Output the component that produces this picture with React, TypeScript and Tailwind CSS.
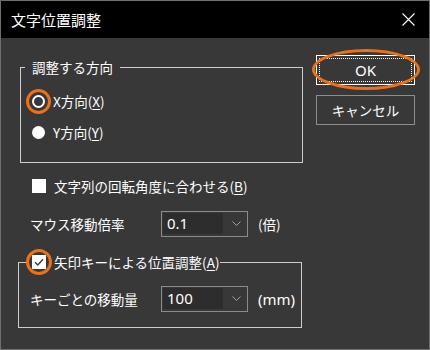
import type { ReactNode } from 'react'

const ORANGE = 'border-[#f07016]'

function Chevron() {
  return (
    <svg width="9" height="5" viewBox="0 0 9 5">
      <path d="M0.5 0.5 L4.5 4.5 L8.5 0.5" fill="none" stroke="#a0a0a0" strokeWidth="1" />
    </svg>
  )
}

function Combo({ value }: { value: string }) {
  return (
    <div className="flex h-[26px] w-[87px] border border-[#8b8b8b] p-[1px]">
      <div className="h-[21px] w-[60px] bg-[#2d2d2d] pl-[4px] font-['Noto_Sans',sans-serif] text-[15px] leading-[21px] text-white">
        {value}
      </div>
      <div className="flex flex-1 justify-center pl-[4px] pt-[8px]">
        <Chevron />
      </div>
    </div>
  )
}

function Ring({ size, offset }: { size: string; offset: string }) {
  return <span className={`pointer-events-none absolute rounded-full border-[3px] ${ORANGE} ${size} ${offset}`} />
}

function Mnemonic({ before, k, after }: { before: string; k: string; after?: ReactNode }) {
  return (
    <span>
      {before}(<span className="underline underline-offset-2">{k}</span>){after}
    </span>
  )
}

export default function App() {
  return (
    <div className="flex h-[350px] w-[430px] flex-col border border-[#6f6f6f] bg-[#383838] font-['Noto_Sans_CJK_JP',sans-serif] text-[13.5px] text-white">
      {/* Title bar */}
      <div className="flex h-[37px] shrink-0 items-center justify-between bg-black pl-[10px] pr-[14px]">
        <span className="text-[15px] leading-[20px]">文字位置調整</span>
        <svg width="13" height="13" viewBox="0 0 13 13">
          <path d="M0.5 0.5 L12.5 12.5 M12.5 0.5 L0.5 12.5" stroke="#fff" strokeWidth="1.1" />
        </svg>
      </div>

      {/* Direction group + buttons */}
      <div className="mt-[17px] flex">
        <div className="ml-[19px] w-[283px] pt-[2px]">
          <fieldset className="border border-[#cdcdcd]">
            <legend className="ml-[4px] px-[7px] leading-[20px]">調整する方向</legend>
            <div className="flex flex-col gap-[11px] pb-[20px] pl-[11px] pt-[14px]">
              <div className="flex h-[20px] items-center leading-[20px]">
                <span className="relative h-[13px] w-[13px] rounded-full border-2 border-white">
                  <Ring size="h-[25px] w-[25px]" offset="-left-[8px] -top-[8px]" />
                </span>
                <span className="ml-[8px]">
                  <Mnemonic before="X方向" k="X" />
                </span>
              </div>
              <div className="flex h-[20px] items-center leading-[20px]">
                <span className="h-[13px] w-[13px] rounded-full bg-white" />
                <span className="ml-[8px]">
                  <Mnemonic before="Y方向" k="Y" />
                </span>
              </div>
            </div>
          </fieldset>
        </div>

        <div className="ml-[13px] flex w-[99px] flex-col">
          <div className="relative h-[30px] border border-white p-[2px]">
            <div className="flex h-full items-center justify-center border border-dotted border-white font-['Noto_Sans',sans-serif] text-[15px]">
              OK
            </div>
            <span className={`pointer-events-none absolute -bottom-[6px] -left-[5px] -right-[6px] -top-[7px] rounded-[50%] border-[3px] ${ORANGE}`} />
          </div>
          <div className="mt-[10px] flex h-[30px] items-center justify-center border border-[#8e8e8e]">キャンセル</div>
        </div>
      </div>

      {/* Rotation checkbox */}
      <div className="ml-[31px] mt-[13px] flex h-[20px] items-center leading-[20px]">
        <span className="h-[14px] w-[14px] bg-white" />
        <span className="ml-[8px]">
          <Mnemonic before="文字列の回転角度に合わせる" k="B" />
        </span>
      </div>

      {/* Mouse rate */}
      <div className="mt-[15px] flex h-[26px] items-center">
        <span className="ml-[29px] w-[131px]">マウス移動倍率</span>
        <Combo value="0.1" />
        <span className="ml-[10px]">(倍)</span>
      </div>

      {/* Arrow key group */}
      <fieldset className="ml-[17px] mt-[12px] w-[284px] border border-[#cdcdcd]">
        <legend className="ml-[10px] h-[26px] pl-[3px] pr-[1px]">
          <div className="flex h-[26px] items-center leading-[20px]">
            <span className="relative flex h-[14px] w-[14px] items-center justify-center bg-white">
              <svg width="14" height="14" viewBox="0 0 14 14">
                <path d="M3 7.2 L5.8 10 L11 4.2" fill="none" stroke="#3a3a3a" strokeWidth="1.4" />
              </svg>
              <Ring size="h-[26px] w-[26px]" offset="-left-[6px] -top-[6px]" />
            </span>
            <span className="ml-[8px]">
              <Mnemonic before="矢印キーによる位置調整" k="A" />
            </span>
          </div>
        </legend>
        <div className="mb-[15px] mt-[11px] flex h-[26px] items-center pl-[11px]">
          <span className="w-[131px]">キーごとの移動量</span>
          <Combo value="100" />
          <span className="ml-[10px] font-['Noto_Sans',sans-serif] text-[15px]">(mm)</span>
        </div>
      </fieldset>
    </div>
  )
}
